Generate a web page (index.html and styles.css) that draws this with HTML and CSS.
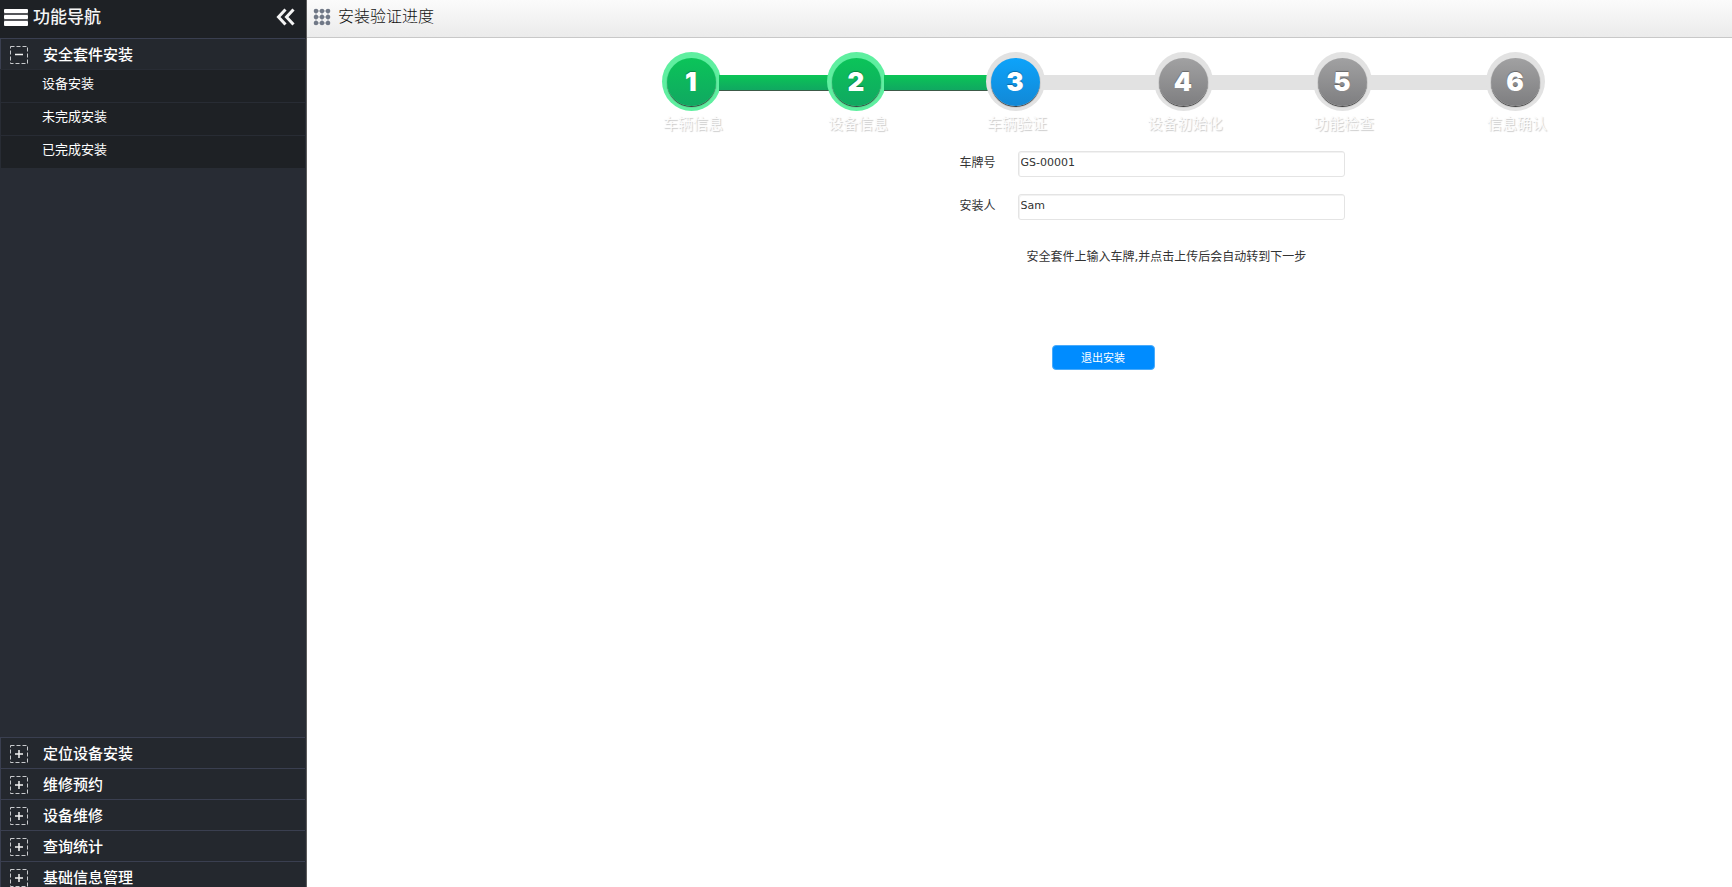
FILE: index.html
```html
<!DOCTYPE html>
<html lang="zh-CN">
<head>
<meta charset="utf-8">
<title>安装验证进度</title>
<link rel="stylesheet" href="styles.css">
</head>
<body>
<div class="app">
  <aside class="sidebar">
    <header class="sidebar-head">
      <svg class="menu-icon" width="26" height="20" viewBox="0 0 26 20" aria-hidden="true">
        <rect x="1" y="4" width="24" height="14" fill="#55565a"/>
        <g fill="#fff"><rect x="1" y="2" width="24" height="4" rx="1"/><rect x="1" y="8" width="24" height="4" rx="1"/><rect x="1" y="14" width="24" height="5" rx="1"/></g>
      </svg>
      <h2 class="sidebar-title">功能导航</h2>
      <button class="collapse" type="button" aria-label="收起">
        <svg width="20" height="18" viewBox="0 0 20 18" fill="none" stroke="#f4f4f4" stroke-width="3"><path d="M9.500 1.500 2.500 9l7 7.500M17.500 1.500 10.500 9l7 7.500"/></svg>
      </button>
    </header>
    <nav class="nav">
      <button class="group" type="button" aria-expanded="true"><svg class="box" viewBox="0 0 18 18"><rect class="dash" x=".5" y=".5" width="17" height="17"/><path class="sign" d="M5 8.500h8"/></svg>安全套件安装</button>
      <ul class="items">
        <li><a class="item" href="#">设备安装</a></li>
        <li><a class="item" href="#">未完成安装</a></li>
        <li><a class="item" href="#">已完成安装</a></li>
      </ul>
      <div class="lower">
        <button class="group" type="button"><svg class="box" viewBox="0 0 18 18"><rect class="dash" x=".5" y=".5" width="17" height="17"/><path class="sign" d="M5 9h8M9 5v8"/></svg>定位设备安装</button>
        <button class="group" type="button"><svg class="box" viewBox="0 0 18 18"><rect class="dash" x=".5" y=".5" width="17" height="17"/><path class="sign" d="M5 9h8M9 5v8"/></svg>维修预约</button>
        <button class="group" type="button"><svg class="box" viewBox="0 0 18 18"><rect class="dash" x=".5" y=".5" width="17" height="17"/><path class="sign" d="M5 9h8M9 5v8"/></svg>设备维修</button>
        <button class="group" type="button"><svg class="box" viewBox="0 0 18 18"><rect class="dash" x=".5" y=".5" width="17" height="17"/><path class="sign" d="M5 9h8M9 5v8"/></svg>查询统计</button>
        <button class="group" type="button"><svg class="box" viewBox="0 0 18 18"><rect class="dash" x=".5" y=".5" width="17" height="17"/><path class="sign" d="M5 9h8M9 5v8"/></svg>基础信息管理</button>
      </div>
    </nav>
  </aside>
  <main class="main">
    <header class="page-head">
      <svg width="18" height="18" viewBox="0 0 18 18" fill="#707886" aria-hidden="true">
        <path d="M3 3h12M3 9h12M3 15h12M3 3v12M9 3v12M15 3v12" stroke="#a3a8b0" stroke-width="1"/>
        <circle cx="3" cy="3" r="2.300"/><circle cx="9" cy="3" r="2.300"/><circle cx="15" cy="3" r="2.300"/>
        <circle cx="3" cy="9" r="2.300"/><circle cx="9" cy="9" r="2.300"/><circle cx="15" cy="9" r="2.300"/>
        <circle cx="3" cy="15" r="2.300"/><circle cx="9" cy="15" r="2.300"/><circle cx="15" cy="15" r="2.300"/>
      </svg>
      <h1 class="page-title">安装验证进度</h1>
    </header>
    <div class="content">
      <ol class="steps">
        <li class="step done"><span class="ring"><span class="disc">1</span></span><span class="label">车辆信息</span></li>
        <li class="line line-done" aria-hidden="true"></li>
        <li class="step done"><span class="ring"><span class="disc">2</span></span><span class="label">设备信息</span></li>
        <li class="line line-done" aria-hidden="true"></li>
        <li class="step current"><span class="ring"><span class="disc">3</span></span><span class="label">车辆验证</span></li>
        <li class="line" aria-hidden="true"></li>
        <li class="step"><span class="ring"><span class="disc">4</span></span><span class="label">设备初始化</span></li>
        <li class="line" aria-hidden="true"></li>
        <li class="step"><span class="ring"><span class="disc">5</span></span><span class="label">功能检查</span></li>
        <li class="line" aria-hidden="true"></li>
        <li class="step"><span class="ring"><span class="disc">6</span></span><span class="label">信息确认</span></li>
      </ol>
      <form class="form">
        <label class="field-label" for="plate">车牌号</label>
        <input class="field" id="plate" type="text" value="GS-00001">
        <label class="field-label" for="installer">安装人</label>
        <input class="field" id="installer" type="text" value="Sam">
        <p class="hint">安全套件上输入车牌,并点击上传后会自动转到下一步</p>
      </form>
      <button class="exit" type="button">退出安装</button>
    </div>
  </main>
</div>
</body>
</html>
```
FILE: styles.css
```css
* { box-sizing: border-box; }

body {
  margin: 0;
  background: #fff;
  color: #333;
  font-family: "DejaVu Sans", "Noto Sans CJK SC", sans-serif;
  font-size: 12px;
}

h1, h2, p, ul, ol { margin: 0; padding: 0; list-style: none; }
button, input { font-family: inherit; }

.app { display: flex; height: 100vh; overflow: hidden; }

/* Sidebar */
.sidebar {
  display: flex;
  flex-direction: column;
  flex: 0 0 307px;
  background: #282c34;
  border-right: 1px solid #5c5c5c;
  color: #fff;
}

.sidebar-head {
  display: flex;
  align-items: center;
  flex: 0 0 38px;
  padding: 0 10px 4px 3px;
  background: #1e2125;
}

.sidebar-title { margin-left: 4px; font-size: 17px; line-height: 24px; font-weight: 500; color: #f4f4f4; }

.collapse {
  display: flex;
  margin-left: auto;
  padding: 0;
  border: 0;
  background: none;
}

.nav { display: flex; flex: 1; flex-direction: column; min-height: 0; padding-right: 1px; }

.group {
  display: flex;
  align-items: center;
  flex: none;
  gap: 15px;
  width: 100%;
  height: 31px;
  padding: 1px 0 0 9px;
  border: 0;
  border-top: 1px solid #3a3f50;
  border-left: 1px solid #3a3f50;
  background: #24282e;
  color: #fff;
  font-size: 15px;
  font-weight: 500;
  line-height: 20px;
}

.box { width: 18px; height: 18px; fill: none; }
.dash { stroke: #c8cacd; stroke-dasharray: 4 2; }
.sign { stroke: #f4f4f4; stroke-width: 1.5; }

.items { background: #1e2125; }
.item {
  display: block;
  height: 33px;
  padding: 4px 0 0 41px;
  border-top: 1px solid #282c34;
  border-left: 1px solid #282c34;
  color: #fff;
  font-size: 13px;
  line-height: 20px;
  text-decoration: none;
}

.lower { margin-top: auto; height: 150px; flex: none; overflow: hidden; }

/* Page */
.main { flex: 1; min-width: 0; }

.page-head {
  display: flex;
  align-items: center;
  gap: 7px;
  height: 38px;
  padding: 0 0 3px 6px;
  border-bottom: 1px solid #c8c8c8;
  background: linear-gradient(#fbfbfb, #ebebeb);
}

.page-title { font-size: 16px; font-weight: 300; line-height: 24px; color: #111; }

.content {
  display: flex;
  flex-direction: column;
  align-items: center;
  padding: 14px 0 0 167px;
}

/* Progress */
.steps {
  display: grid;
  grid-template-columns: 59px 106fr 59px 100fr 59px 109fr 59px 100fr 59px 114fr 59px;
  width: 100%;
  max-width: 883px;
}

.step { display: flex; flex-direction: column; align-items: center; }

.ring {
  display: grid;
  place-items: center;
  width: 59px;
  height: 59px;
  border-radius: 50%;
  background: #e2e2e2;
}

.disc {
  width: 49px;
  height: 48px;
  border-radius: 50%;
  background: linear-gradient(#a1a1a2, #7e7e80);
  box-shadow: 0 1px 1px #333;
  color: #fff;
  font-family: Inter, sans-serif;
  font-size: 26px;
  font-weight: 900;
  line-height: 48px;
  text-align: center;
  text-shadow: 0 -1px 1px rgba(0, 0, 0, .3);
}

.done .ring { background: #5fefa0; }
.done .disc { background: linear-gradient(#0bc459, #10a861); }
.current .disc { background: linear-gradient(#0da3fa, #1288d6); }

.line { height: 15px; margin: 23px -2px 0; background: #e2e2e2; }
.line-done {
  height: 16px;
  background: linear-gradient(#0bc556, #10a861);
  border-bottom: 1px solid #3c5a48;
}

.label {
  padding-left: 4px;
  color: #fcfcfc;
  font-size: 15px;
  line-height: 26px;
  text-shadow: 1px 1px 1px #ccc;
  white-space: nowrap;
}

/* Form */
.form {
  display: grid;
  grid-template-columns: 37px 327px;
  column-gap: 21px;
  row-gap: 17px;
  margin: 14px 0 0 98px;
}

.field-label { line-height: 25px; }

.field {
  width: 100%;
  height: 26px;
  padding: 0 2px 3px;
  border: 1px solid #e4e4e4;
  border-radius: 3px;
  box-shadow: inset 1px 1px 0 #f2f2f2;
  background: #fff;
  color: #333;
  font-size: 11px;
}

.hint { grid-column: 2; padding: 10px 0 0 9px; line-height: 20px; white-space: nowrap; }

.exit {
  width: 103px;
  height: 25px;
  margin-top: 78px;
  padding: 0 0 1px;
  border: 1px solid #4aabfb;
  border-radius: 4px;
  background: #008cff;
  color: #fff;
  font-size: 11px;
}
```
